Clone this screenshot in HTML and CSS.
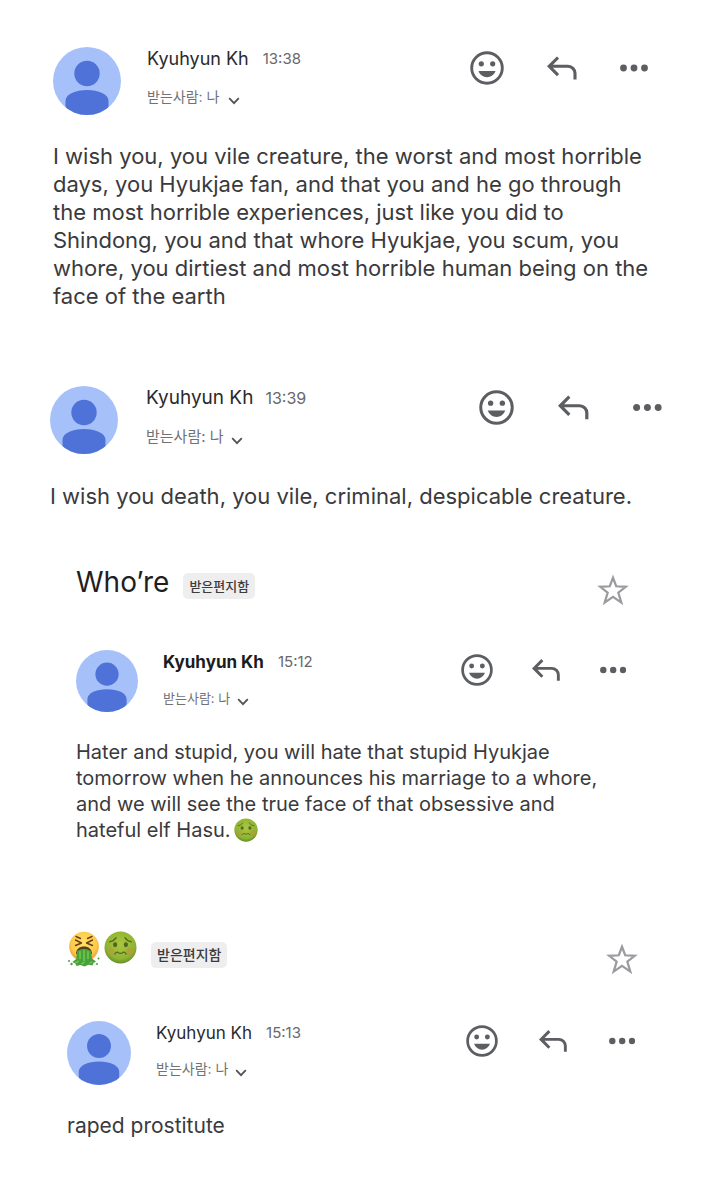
FILE: index.html
```html
<!DOCTYPE html>
<html lang="ko">
<head>
<meta charset="utf-8">
<meta name="viewport" content="width=device-width, initial-scale=1">
<title>받은편지함</title>
<link rel="stylesheet" href="styles.css">
</head>
<body>
<svg class="defs" aria-hidden="true">
  <symbol id="avatar" viewBox="0 0 68 68">
    <clipPath id="disc"><circle cx="34" cy="34" r="34"/></clipPath>
    <g clip-path="url(#disc)">
      <rect width="68" height="68" fill="#a6c1f9"/>
      <circle cx="34" cy="26.500" r="12.700" fill="#4e72d8"/>
      <path d="M12.500 68V54c0-7 10-11 21.500-11s21.500 4 21.500 11v14z" fill="#4e72d8"/>
    </g>
  </symbol>
  <symbol id="smile" viewBox="0 0 34 34">
    <circle cx="17" cy="17" r="15.300" fill="none" stroke="currentColor" stroke-width="2.900"/>
    <circle cx="11.300" cy="12.800" r="2.600" fill="currentColor"/>
    <circle cx="22.700" cy="12.800" r="2.600" fill="currentColor"/>
    <path d="M8.500 20h17c-1.500 4-4.700 6.200-8.500 6.200S10 24 8.500 20z" fill="currentColor"/>
  </symbol>
  <symbol id="reply" viewBox="0 0 30 34">
    <path d="M11 6.500 2.200 15.300 11 24.100M2.500 15.300h18.500a7 7 0 0 1 7 7v6.200" fill="none" stroke="currentColor" stroke-width="3.100"/>
  </symbol>
  <symbol id="dots" viewBox="0 0 28 34">
    <g fill="currentColor"><circle cx="3.500" cy="17" r="3.400"/><circle cx="14" cy="17" r="3.400"/><circle cx="24.500" cy="17" r="3.400"/></g>
  </symbol>
  <symbol id="star" viewBox="0 0 30 30">
    <path d="M15 3.500 18 11.500 27 12 20 17.500 22.800 26.800 15 21.500 7.200 26.800 10 17.500 3 12 12 11.500z" fill="none" stroke="currentColor" stroke-width="2.100"/>
  </symbol>
  <symbol id="chevron" viewBox="0 0 12 8">
    <path d="M1.200 1.200 6 6.200 10.800 1.200" fill="none" stroke="currentColor" stroke-width="1.800"/>
  </symbol>
  <radialGradient id="green" cx=".5" cy=".4" r=".6"><stop offset="0" stop-color="#a9c63f"/><stop offset=".75" stop-color="#8fb534"/><stop offset="1" stop-color="#668f25"/></radialGradient>
  <radialGradient id="yellow" cx=".5" cy=".4" r=".6"><stop offset="0" stop-color="#ffe36a"/><stop offset=".7" stop-color="#fdcb4c"/><stop offset="1" stop-color="#eb9a35"/></radialGradient>
  <symbol id="nausea" viewBox="0 0 32 32">
    <circle cx="16" cy="16" r="15.500" fill="url(#green)"/>
    <circle cx="6.500" cy="20" r="4" fill="#c58a35" opacity=".3"/><circle cx="25.500" cy="20" r="4" fill="#c58a35" opacity=".4"/>
    <g fill="#55641f"><ellipse cx="10.800" cy="13.300" rx="2" ry="2.400"/><ellipse cx="21.200" cy="13.300" rx="2" ry="2.400"/></g>
    <path d="M5.500 10.500Q9.500 9.800 11.800 6.500M26.500 10.500Q22.500 9.800 20.200 6.500M10.500 22.500q1.500-3 3.500-1.500q2 1.200 4 0q2-1.500 3.500 1.500" fill="none" stroke="#55641f" stroke-width="1.200" stroke-linecap="round"/>
  </symbol>
  <symbol id="vomit" viewBox="0 0 32 36">
    <circle cx="16.500" cy="15.500" r="14.800" fill="url(#yellow)"/>
    <path d="M8.500 5.500 13 7.500M24.500 5.500 20 7.500M8 9l6 3-6 2.500M25 9l-6 3 6 2.500" fill="none" stroke="#6d3f16" stroke-width="1.400" stroke-linecap="round" stroke-linejoin="round"/>
    <path d="M8.500 23c0-5 3.500-7.500 8-7.500s8 2.500 8 7.500z" fill="#5a3a1a"/>
    <path d="M9.500 20q7-4.500 14 0l1 7.500 4 3-2.500 1.500-1 2.500-4-.8-4 1.800-4-1.500-4 1-1.200-2.500-3-1.500 4-3z" fill="#46a33c"/>
    <path d="M12.500 20v8M16.500 19v11M20.500 20v8M8 32l3-2M22 32l3-1M14 33l3-2" stroke="#7fcb50" stroke-width="1.300"/>
    <g fill="#46a33c"><circle cx="1.500" cy="30" r="1"/><circle cx="4" cy="33" r="1.200"/><circle cx="31" cy="27.500" r="1"/><circle cx="29.500" cy="33" r="1"/></g>
  </symbol>
</svg>

<main class="mail">
  <article class="message first">
    <header class="head">
      <svg class="avatar" aria-hidden="true"><use href="#avatar"/></svg>
      <div class="meta">
        <div class="from"><span class="name">Kyuhyun Kh</span><time>13:38</time></div>
        <button class="to">받는사람: 나 <svg class="chevron" aria-hidden="true"><use href="#chevron"/></svg></button>
      </div>
      <div class="actions">
        <button aria-label="반응"><svg class="smile"><use href="#smile"/></svg></button>
        <button aria-label="답장"><svg class="reply"><use href="#reply"/></svg></button>
        <button aria-label="더보기"><svg class="dots"><use href="#dots"/></svg></button>
      </div>
    </header>
    <p class="body">I wish you, you vile creature, the worst and most horrible days, you Hyukjae fan, and that you and he go through the most horrible experiences, just like you did to Shindong, you and that whore Hyukjae, you scum, you whore, you dirtiest and most horrible human being on the face of the earth</p>
  </article>

  <article class="message second">
    <header class="head">
      <svg class="avatar" aria-hidden="true"><use href="#avatar"/></svg>
      <div class="meta">
        <div class="from"><span class="name">Kyuhyun Kh</span><time>13:39</time></div>
        <button class="to">받는사람: 나 <svg class="chevron" aria-hidden="true"><use href="#chevron"/></svg></button>
      </div>
      <div class="actions">
        <button aria-label="반응"><svg class="smile"><use href="#smile"/></svg></button>
        <button aria-label="답장"><svg class="reply"><use href="#reply"/></svg></button>
        <button aria-label="더보기"><svg class="dots"><use href="#dots"/></svg></button>
      </div>
    </header>
    <p class="body">I wish you death, you vile, criminal, despicable creature.</p>
  </article>

  <article class="message third">
    <div class="subject">
      <h2>Who’re</h2>
      <span class="chip">받은편지함</span>
      <button class="favorite" aria-label="별표"><svg class="star"><use href="#star"/></svg></button>
    </div>
    <header class="head">
      <svg class="avatar" aria-hidden="true"><use href="#avatar"/></svg>
      <div class="meta">
        <div class="from"><span class="name unread">Kyuhyun Kh</span><time>15:12</time></div>
        <button class="to">받는사람: 나 <svg class="chevron" aria-hidden="true"><use href="#chevron"/></svg></button>
      </div>
      <div class="actions">
        <button aria-label="반응"><svg class="smile"><use href="#smile"/></svg></button>
        <button aria-label="답장"><svg class="reply"><use href="#reply"/></svg></button>
        <button aria-label="더보기"><svg class="dots"><use href="#dots"/></svg></button>
      </div>
    </header>
    <p class="body">Hater and stupid, you will hate that stupid Hyukjae tomorrow when he announces his marriage to a whore, and we will see the true face of that obsessive and hateful elf Hasu.<svg class="inline-emoji" role="img" aria-label="메스꺼운 얼굴"><use href="#nausea"/></svg></p>
  </article>

  <article class="message fourth">
    <div class="subject">
      <h2 class="emoji-title"><svg class="vomit" role="img" aria-label="토하는 얼굴"><use href="#vomit"/></svg><svg class="nausea" role="img" aria-label="메스꺼운 얼굴"><use href="#nausea"/></svg></h2>
      <span class="chip">받은편지함</span>
      <button class="favorite" aria-label="별표"><svg class="star"><use href="#star"/></svg></button>
    </div>
    <header class="head">
      <svg class="avatar" aria-hidden="true"><use href="#avatar"/></svg>
      <div class="meta">
        <div class="from"><span class="name">Kyuhyun Kh</span><time>15:13</time></div>
        <button class="to">받는사람: 나 <svg class="chevron" aria-hidden="true"><use href="#chevron"/></svg></button>
      </div>
      <div class="actions">
        <button aria-label="반응"><svg class="smile"><use href="#smile"/></svg></button>
        <button aria-label="답장"><svg class="reply"><use href="#reply"/></svg></button>
        <button aria-label="더보기"><svg class="dots"><use href="#dots"/></svg></button>
      </div>
    </header>
    <p class="body">raped prostitute</p>
  </article>
</main>
</body>
</html>
```
FILE: styles.css
```css
* { box-sizing: border-box; }

body {
  margin: 0;
  background: #fff;
  color: #3a3a3c;
  font-family: Inter, "Noto Sans CJK KR", sans-serif;
}

.defs { position: absolute; width: 0; height: 0; }

button {
  display: flex;
  align-items: center;
  padding: 0;
  border: 0;
  background: none;
  color: inherit;
  font: inherit;
  cursor: pointer;
}

.mail { padding: 47px 0 56px; }

.message {
  --icon: 34px;
  --avatar: 68px;
}

.first { padding: 0 60px 0 53px; }
.second { padding: 76px 46px 0 50px; --icon: 35px; }
.third { padding: 54px 82px 0 76px; --icon: 32px; --avatar: 62px; }
.fourth { padding: 88px 73px 0 67px; --icon: 32px; --avatar: 64px; }

.head {
  display: flex;
  align-items: flex-start;
}

.avatar { flex: none; width: var(--avatar); height: var(--avatar); }

.meta { flex: 1; margin-left: 26px; }

.second .meta { margin-left: 28px; }
.third .meta, .fourth .meta { margin-left: 25px; }

.from {
  display: flex;
  align-items: center;
  gap: 14px;
  line-height: 24px;
  font-size: 18px;
  color: #2a2a2c;
}

.second .from { font-size: 19px; gap: 12px; }
.third .from, .fourth .from { font-size: 17px; }
.unread { font-weight: 700; color: #1c1c1e; }

time { font-size: 15px; color: #66686c; }

.second time { font-size: 16px; }

.to {
  margin-top: 14px;
  gap: 9px;
  font-size: 14px;
  line-height: 24px;
  color: #707276;
}

.second .to { margin-top: 15px; gap: 7px; font-size: 15px; }
.third .to, .fourth .to { margin-top: 12px; gap: 7px; font-size: 13px; }
.fourth .to { font-size: 14px; }

.chevron { width: 12px; height: 8px; margin-top: 8px; color: #505256; }

.actions {
  display: flex;
  gap: 43px;
  height: 42px;
  color: #5c5e62;
}

.second .actions { gap: 44px; }
.third .actions { gap: 39px; height: 40px; }
.fourth .actions { gap: 41px; height: 40px; }

.smile { width: var(--icon); height: var(--icon); }
.reply { width: calc(var(--icon) * 15 / 17); height: var(--icon); }
.dots { width: calc(var(--icon) * 14 / 17); height: var(--icon); }

.body {
  margin: 27px 0 0;
  font-size: 22px;
  line-height: 28px;
}

.first .body { margin-right: -8px; }
.second .body { margin-top: 28px; }
.third .body { padding-right: 14px; font-size: 20px; line-height: 26px; }
.fourth .body { font-size: 21px; }

.subject {
  display: flex;
  align-items: center;
  min-height: 36px;
  margin-bottom: 42px;
}

h2 {
  margin: 0 14px 0 0;
  padding-bottom: 8px;
  font-size: 28px;
  line-height: 36px;
  font-weight: 400;
  color: #1f1f21;
}

.emoji-title { display: flex; gap: 4px; padding-bottom: 12px; }
.vomit { width: 33px; height: 36px; }
.nausea { width: 33px; height: 33px; }

.chip {
  padding: 0 6px;
  border-radius: 5px;
  background: #eeeeef;
  color: #3c3c3e;
  font-size: 13px;
  line-height: 26px;
  font-weight: 500;
}

.fourth .chip { font-size: 14px; }

.favorite { margin: 0 -3px 0 auto; padding-top: 8px; color: #999b9f; }
.star { width: 32px; height: 32px; }

.inline-emoji { width: 24px; height: 24px; margin-left: 3px; vertical-align: -5px; }
```
